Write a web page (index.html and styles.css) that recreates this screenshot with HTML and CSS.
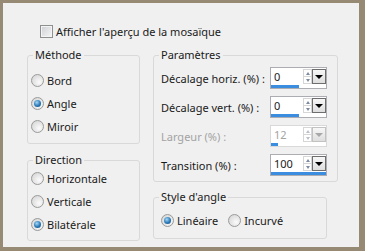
FILE: index.html
```html
<!DOCTYPE html>
<html lang="fr">
<head>
    <meta charset="UTF-8">
    <title>Mosaïque - Paramètres</title>
    <link rel="stylesheet" href="styles.css">
</head>
<body>
    <div class="dialog">
        <label class="check-row"><span class="checkbox"></span>Afficher l'aperçu de la mosaïque</label>

        <div class="columns">
            <div class="col-left">
                <fieldset class="group">
                    <legend>Méthode</legend>
                    <div class="radio-list method-list">
                        <label class="option"><span class="radio"></span>Bord</label>
                        <label class="option"><span class="radio checked"></span>Angle</label>
                        <label class="option"><span class="radio"></span>Miroir</label>
                    </div>
                </fieldset>
                <fieldset class="group">
                    <legend>Direction</legend>
                    <div class="radio-list direction-list">
                        <label class="option"><span class="radio"></span>Horizontale</label>
                        <label class="option"><span class="radio"></span>Verticale</label>
                        <label class="option"><span class="radio checked"></span>Bilatérale</label>
                    </div>
                </fieldset>
            </div>

            <div class="col-right">
                <fieldset class="group params">
                    <legend>Paramètres</legend>
                    <div class="param-grid">
                        <span class="param-label">Décalage horiz. (%) :</span>
                        <div class="spin">
                            <div class="spin-main">
                                <span class="spin-value">0</span>
                                <span class="spin-arrows"><span class="arrow-up"></span><span class="arrow-down"></span></span>
                                <span class="spin-drop"><span class="drop-tri"></span></span>
                            </div>
                            <span class="spin-bar" style="width: 50%"></span>
                        </div>

                        <span class="param-label">Décalage vert. (%) :</span>
                        <div class="spin">
                            <div class="spin-main">
                                <span class="spin-value">0</span>
                                <span class="spin-arrows"><span class="arrow-up"></span><span class="arrow-down"></span></span>
                                <span class="spin-drop"><span class="drop-tri"></span></span>
                            </div>
                            <span class="spin-bar" style="width: 50%"></span>
                        </div>

                        <span class="param-label disabled">Largeur (%) :</span>
                        <div class="spin disabled">
                            <div class="spin-main">
                                <span class="spin-value">12</span>
                                <span class="spin-arrows"><span class="arrow-up"></span><span class="arrow-down"></span></span>
                                <span class="spin-drop"><span class="drop-tri"></span></span>
                            </div>
                            <span class="spin-bar" style="width: 12%"></span>
                        </div>

                        <span class="param-label">Transition (%) :</span>
                        <div class="spin">
                            <div class="spin-main">
                                <span class="spin-value">100</span>
                                <span class="spin-arrows"><span class="arrow-up"></span><span class="arrow-down"></span></span>
                                <span class="spin-drop"><span class="drop-tri"></span></span>
                            </div>
                            <span class="spin-bar" style="width: 100%"></span>
                        </div>
                    </div>
                </fieldset>

                <fieldset class="group corner">
                    <legend>Style d'angle</legend>
                    <div class="radio-row">
                        <label class="option"><span class="radio checked"></span>Linéaire</label>
                        <label class="option"><span class="radio"></span>Incurvé</label>
                    </div>
                </fieldset>
            </div>
        </div>
    </div>
</body>
</html>
```

FILE: styles.css
```css
body {
    margin: 0;
    font-family: "Noto Sans", sans-serif;
    font-size: 11px;
    color: #1a1a1a;
}
.dialog {
    width: 365px;
    height: 251px;
    box-sizing: border-box;
    border: solid #968a74;
    border-width: 3px 6px 4px 3px;
    background-color: #f0f0f0;
    padding: 22px 0 0 24px;
}
.check-row {
    display: flex;
    align-items: center;
    gap: 3px;
    height: 13px;
    margin-left: 13px;
}
.checkbox {
    width: 13px;
    height: 13px;
    box-sizing: border-box;
    border: 1px solid #8e8f8f;
    background: linear-gradient(135deg, #cdd0d4, #f6f6f6);
    box-shadow: inset 0 0 0 1px #f4f4f4;
}
.columns {
    display: flex;
    gap: 13px;
    margin-top: 10px;
}
.col-left {
    width: 113px;
    display: flex;
    flex-direction: column;
    gap: 9px;
}
.col-right {
    width: 185px;
    display: flex;
    flex-direction: column;
    gap: 8px;
}
.group {
    margin: 0;
    padding: 0;
    min-width: 0;
    box-sizing: border-box;
    border: 1px solid #d9d9d9;
    border-radius: 3px;
}
.group legend {
    margin-left: 5px;
    padding: 0 2px;
    line-height: 14px;
}
.radio-list {
    display: flex;
    flex-direction: column;
    padding-left: 3px;
}
.method-list {
    padding-top: 7px;
    padding-bottom: 5px;
}
.direction-list {
    padding-bottom: 4px;
}
.option {
    height: 23px;
    display: flex;
    align-items: center;
    gap: 3px;
}
.radio {
    width: 13px;
    height: 13px;
    box-sizing: border-box;
    border-radius: 50%;
    border: 1px solid #9a9a9a;
    background: radial-gradient(circle at 65% 65%, #fbfbfb, #d0d0d0);
    display: flex;
    align-items: center;
    justify-content: center;
}
.radio.checked::after {
    content: "";
    width: 7px;
    height: 7px;
    border-radius: 50%;
    background: radial-gradient(circle at 40% 35%, #a6d8f8, #2a78b6 55%, #0c4a7c);
}

/* parameters */
.param-grid {
    display: grid;
    grid-template-columns: 109px 57px;
    row-gap: 7px;
    align-items: center;
    padding: 5px 0 5px 7px;
}
.param-label.disabled {
    color: #a3a3a3;
}
.spin {
    width: 57px;
    height: 22px;
    box-sizing: border-box;
    border: 1px solid #abadb3;
    background-color: #fff;
    display: flex;
    flex-direction: column;
}
.spin-main {
    flex: 1;
    display: flex;
}
.spin-value {
    width: 32px;
    padding-left: 3px;
    box-sizing: border-box;
    line-height: 17px;
}
.spin-arrows {
    width: 9px;
    box-sizing: border-box;
    border: 1px solid #d6d6d6;
    margin: 1px 0;
    display: flex;
    flex-direction: column;
}
.arrow-up, .arrow-down {
    flex: 1;
    display: flex;
    align-items: center;
    justify-content: center;
}
.arrow-up {
    border-bottom: 1px solid #d6d6d6;
}
.arrow-up::after, .arrow-down::after {
    content: "";
    border-left: 2.5px solid transparent;
    border-right: 2.5px solid transparent;
}
.arrow-up::after {
    border-bottom: 3px solid #7d8aa0;
}
.arrow-down::after {
    border-top: 3px solid #7d8aa0;
}
.spin-drop {
    width: 14px;
    box-sizing: border-box;
    border: 1px solid #6e6e6e;
    margin: 1px 0;
    background: linear-gradient(#f7f7f7, #dedede);
    display: flex;
    align-items: center;
    justify-content: center;
}
.drop-tri {
    border-left: 4px solid transparent;
    border-right: 4px solid transparent;
    border-top: 4px solid #000;
}
.spin-bar {
    display: block;
    height: 3px;
    background-color: #3b8de0;
}
.spin.disabled {
    border-color: #d9d9d9;
}
.spin.disabled .spin-value {
    color: #a3a3a3;
}
.spin.disabled .spin-drop {
    border-color: #c2c2c2;
}
.spin.disabled .drop-tri {
    border-top-color: #a8a8a8;
}
.spin.disabled .arrow-up::after {
    border-bottom-color: #b8c0cc;
}
.spin.disabled .arrow-down::after {
    border-top-color: #b8c0cc;
}

/* corner style */
.corner {
    width: 174px;
}
.radio-row {
    display: flex;
    gap: 10px;
    padding: 5px 0 6px 7px;
}
```
